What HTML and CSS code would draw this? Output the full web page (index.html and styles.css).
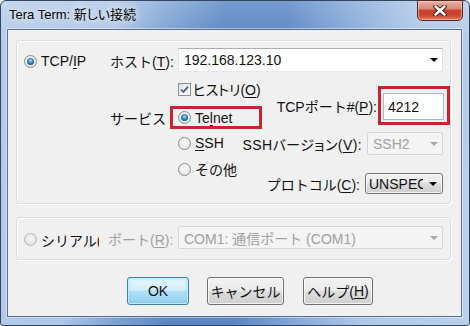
FILE: index.html
```html
<!DOCTYPE html>
<html lang="ja">
<head>
<meta charset="utf-8">
<title>Tera Term: 新しい接続</title>
<link rel="stylesheet" href="styles.css">
</head>
<body>
<div class="window">
  <div class="titlebar">
    <span class="title">Tera Term: 新しい接続</span>
    <div class="close">
      <svg width="14" height="11" viewBox="0 0 14 11"><path d="M2.5 1.5 L11.5 9.5 M11.5 1.5 L2.5 9.5" stroke="#3b1612" stroke-width="4.4" stroke-linecap="round"/><path d="M2.5 1.5 L11.5 9.5 M11.5 1.5 L2.5 9.5" stroke="#ffffff" stroke-width="2.6" stroke-linecap="round"/></svg>
    </div>
  </div>
  <div class="client">
    <div class="group group-tcp">
      <div class="host-row">
        <div class="opt opt-tcp"><span class="radio on"></span><span>TCP/<u>I</u>P</span></div>
        <span class="lbl lbl-host">ホスト(<u>T</u>):</span>
        <div class="combo combo-host"><span>192.168.123.10</span><span class="arrow"></span></div>
      </div>
      <div class="detail">
        <div class="left">
          <div class="opt opt-hist"><span class="check"><svg width="9" height="9" viewBox="0 0 9 9"><path d="M1 4.6 L3.4 7 L8 1.6" stroke="#4a5c95" stroke-width="1.8" fill="none"/></svg></span><span class="prop">ヒストリ(<u>O</u>)</span></div>
          <div class="service-row">
            <span class="lbl lbl-service">サービス</span>
            <div class="mark mark-telnet"><div class="opt"><span class="radio on"></span><span>Te<u>l</u>net</span></div></div>
          </div>
          <div class="opt opt-ssh"><span class="radio"></span><span><u>S</u>SH</span></div>
          <div class="opt opt-other"><span class="radio"></span><span>その他</span></div>
        </div>
        <div class="right">
          <div class="port-row">
            <span class="lbl lbl-port">TCPポート#(<u>P</u>):</span>
            <div class="mark mark-port"><div class="edit">4212</div></div>
          </div>
          <div class="ver-row">
            <span class="lbl lbl-ver prop">SSHバージョン(<u>V</u>):</span>
            <div class="combo combo-dis combo-ver"><span>SSH2</span><span class="arrow"></span></div>
          </div>
          <div class="proto-row">
            <span class="lbl lbl-proto">プロトコル(<u>C</u>):</span>
            <div class="btn dropbtn"><span class="drop-text">UNSPEC</span><span class="arrow"></span></div>
          </div>
        </div>
      </div>
    </div>
    <div class="group group-serial">
      <div class="opt opt-serial"><span class="radio dis"></span><span class="serial-text">シリアル(L)</span></div>
      <span class="lbl lbl-com">ポート(<u>R</u>):</span>
      <div class="combo combo-dis combo-com"><span>COM1: 通信ポート (COM1)</span><span class="arrow"></span></div>
    </div>
    <div class="buttons">
      <div class="btn btn-ok">OK</div>
      <div class="btn btn-cancel">キャンセル</div>
      <div class="btn btn-help">ヘルプ(<u>H</u>)</div>
    </div>
  </div>
</div>
</body>
</html>
```
FILE: styles.css
```css
* { box-sizing: border-box; }
html, body { margin: 0; padding: 0; }
body {
  width: 470px;
  height: 326px;
  overflow: hidden;
  background: #ffffff;
  font-family: "Liberation Sans", "Noto Sans CJK JP", sans-serif;
  font-size: 14px;
  color: #111;
}
.prop { font-feature-settings: "palt" 1; }
u { text-decoration: underline; text-underline-offset: 2px; text-decoration-thickness: 1px; }

.window {
  width: 470px;
  height: 326px;
  border: 1px solid #34465e;
  border-radius: 6px 6px 3px 3px;
  padding: 0 7px 8px 6px;
  display: flex;
  flex-direction: column;
  background:
    linear-gradient(180deg, rgba(255,255,255,0.18) 0%, rgba(255,255,255,0) 12%),
    linear-gradient(100deg, #b6cdea 0%, #aec7e7 22%, #83a7d5 31%, #5987c3 43%, #5a87c4 55%, #86a9d8 67%, #b0c8e7 80%, #bbd1eb 100%);
}
.titlebar {
  height: 28px;
  display: flex;
  align-items: flex-start;
  justify-content: space-between;
  flex-shrink: 0;
}
.title {
  line-height: 28px;
  margin-left: 2px;
  font-size: 13px;
  font-feature-settings: "palt" 1;
  color: #000;
  text-shadow: 0 0 6px rgba(255,255,255,0.9), 0 0 12px rgba(255,255,255,0.6);
}
.close {
  width: 46px;
  height: 21px;
  margin-top: -1px;
  margin-right: -1px;
  border: 1px solid #5b2622;
  border-radius: 0 0 5px 5px;
  background: linear-gradient(180deg, #e8b1a6 0%, #d98a7b 40%, #c4432f 50%, #cc4630 75%, #e27b5c 100%);
  box-shadow: inset 0 0 0 1px rgba(255,230,220,0.45);
  display: flex;
  align-items: center;
  justify-content: center;
}

.client {
  flex: 1;
  background: #f0f0f0;
  border: 1px solid #5a6f8c;
  box-shadow: 0 0 0 1px rgba(255,255,255,0.45);
  padding: 10px 0 0 8px;
  display: flex;
  flex-direction: column;
}

.group {
  width: 435px;
  border: 1px solid #d5dfe5;
  border-radius: 3px;
  box-shadow: inset 1px 1px 0 #ffffff, 1px 1px 0 #ffffff;
}
.group-tcp { height: 164px; }

.opt { display: flex; align-items: center; gap: 4px; white-space: nowrap; height: 16px; }
.lbl { white-space: nowrap; }

.radio {
  width: 13px;
  height: 13px;
  border-radius: 50%;
  border: 1px solid #8b8b8b;
  background: radial-gradient(circle at 50% 40%, #ffffff 0%, #ececec 55%, #d2d2d2 100%);
  flex-shrink: 0;
  display: flex;
  align-items: center;
  justify-content: center;
}
.radio.on::after {
  content: "";
  width: 7px;
  height: 7px;
  border-radius: 50%;
  background: radial-gradient(circle at 50% 38%, #b4e3fb 0%, #3d90c9 38%, #124a7a 80%, #0c3358 100%);
}
.radio.dis { border-color: #b2b2b2; background: radial-gradient(circle at 50% 40%, #f6f6f6 0%, #e6e6e6 60%, #d8d8d8 100%); }

.check {
  width: 13px;
  height: 13px;
  border: 1px solid #8e8f8f;
  background: linear-gradient(135deg, #d9dde6 0%, #f4f5f8 60%, #ffffff 100%);
  flex-shrink: 0;
  display: flex;
  align-items: center;
  justify-content: center;
}

.combo {
  display: flex;
  align-items: center;
  justify-content: space-between;
  background: #ffffff;
  border: 1px solid #abadb3;
  border-color: #abadb3 #dbdfe6 #e3e9ef #e2e3ea;
  padding: 0 4px 0 5px;
  white-space: nowrap;
}
.arrow {
  width: 0;
  height: 0;
  border-left: 4px solid transparent;
  border-right: 4px solid transparent;
  border-top: 4px solid #000;
  flex-shrink: 0;
}
.combo-dis {
  background: #f4f4f4;
  border: 1px solid #d5d5d5;
  border-radius: 2px;
  color: #a0a0a0;
}
.combo-dis .arrow { border-top-color: #a6a6a6; }

.host-row { display: flex; align-items: center; height: 24px; margin-top: 7px; }
.opt-tcp { width: 86px; margin-left: 7px; margin-top: 2px; }
.lbl-host { width: 68px; margin-top: 1px; }
.combo-host { width: 265px; height: 24px; }

.detail { display: flex; }
.left { width: 219px; flex-shrink: 0; display: flex; flex-direction: column; align-items: flex-start; }
.right { width: 214px; display: flex; flex-direction: column; align-items: flex-end; }

.opt-hist { margin-top: 9px; margin-left: 161px; gap: 2px; }
.service-row { display: flex; align-items: center; margin-top: 9px; margin-left: 93px; }
.lbl-service { width: 60px; }
.mark { border: 3px solid #c9232f; }
.mark-telnet { width: 92px; height: 23px; padding-left: 5px; display: flex; align-items: center; }
.opt-ssh { margin-top: 6px; margin-left: 161px; }
.opt-other { margin-top: 10px; margin-left: 161px; }

.port-row { display: flex; align-items: center; margin-top: 14px; }
.lbl-port { margin-right: 1px; }
.mark-port { width: 72px; height: 39px; padding: 4px 3px 2px 2px; }
.edit {
  height: 100%;
  background: #ffffff;
  border: 1px solid #a9b8c9;
  padding-left: 4px;
  display: flex;
  align-items: center;
}
.ver-row { display: flex; align-items: center; margin-top: 7px; margin-right: 7px; }
.lbl-ver, .lbl-proto { margin-right: 5px; }
.lbl-ver { letter-spacing: 0.4px; }
.combo-ver { width: 76px; height: 23px; }
.proto-row { display: flex; align-items: center; margin-top: 18px; margin-right: 7px; }

.btn {
  height: 28px;
  border: 1px solid #707070;
  border-radius: 3px;
  background: linear-gradient(180deg, #f2f2f2 0%, #ebebeb 49%, #dddddd 50%, #cfcfcf 100%);
  box-shadow: inset 0 0 0 1px rgba(255,255,255,0.75);
  display: flex;
  align-items: center;
  justify-content: center;
  white-space: nowrap;
}
.dropbtn { width: 78px; height: 21px; justify-content: flex-start; padding: 0 5px 0 3px; }
.drop-text { width: 54px; overflow: hidden; }
.dropbtn .arrow { margin-left: auto; }

.group-serial {
  height: 43px;
  margin-top: 13px;
  display: flex;
  align-items: center;
}
.opt-serial { width: 84px; margin-left: 7px; margin-top: 2px; }
.serial-text { width: 58px; overflow: hidden; }
.lbl-com { width: 70px; color: #a0a0a0; }
.combo-com { width: 265px; height: 23px; margin-top: -2px; justify-content: space-between; }

.buttons { display: flex; gap: 18px; margin-top: 17px; margin-left: 111px; }
.btn-ok {
  width: 62px;
  border-color: #3c7fb1;
  background: linear-gradient(180deg, #e8f6fd 0%, #d3eefb 45%, #b2e0f8 52%, #93d0f0 100%);
  box-shadow: inset 0 0 0 1px rgba(200,240,255,0.9), inset 0 0 3px 1px rgba(80,170,230,0.35);
}
.btn-cancel { width: 77px; }
.btn-help { width: 70px; margin-left: 1px; }
```
